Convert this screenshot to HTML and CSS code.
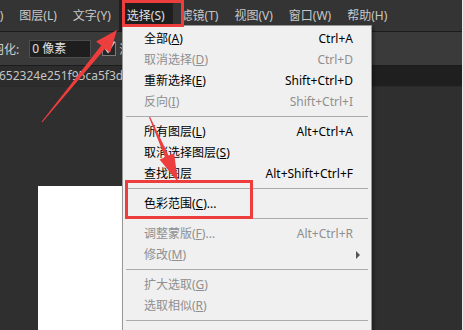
FILE: index.html
```html
<!DOCTYPE html>
<html lang="zh-CN">
<head>
<meta charset="utf-8">
<title>选择菜单</title>
<link rel="stylesheet" href="styles.css">
</head>
<body>
<div class="app">
  <div class="menubar">
    <span class="mb-item first">图像(I)</span>
    <span class="mb-item">图层(L)</span>
    <span class="mb-item">文字(Y)</span>
    <span class="mb-item active">选择(S)</span>
    <span class="mb-item">滤镜(T)</span>
    <span class="mb-item">视图(V)</span>
    <span class="mb-item">窗口(W)</span>
    <span class="mb-item">帮助(H)</span>
  </div>
  <div class="optbar">
    <span class="opt-label">羽化:</span>
    <span class="opt-input">0 像素</span>
    <span class="opt-check">
      <svg width="14" height="15" viewBox="0 0 14 15">
        <rect x="0.5" y="1.5" width="13" height="13" fill="#262626" stroke="#7a7a7a"/>
        <path d="M3.5 7.5 L6 11 L12.5 0.5" fill="none" stroke="#cfcfcf" stroke-width="1.6"/>
      </svg>
    </span>
    <span class="opt-text">消</span>
  </div>
  <div class="tabbar"><span class="tab">652324e251f95ca5f3d</span></div>
  <div class="workspace"><div class="canvas"></div></div>
</div>

<div class="menu">
  <div class="mi"><span>全部(<u>A</u>)</span><span>Ctrl+A</span></div>
  <div class="mi dis"><span>取消选择(<u>D</u>)</span><span>Ctrl+D</span></div>
  <div class="mi"><span>重新选择(<u>E</u>)</span><span>Shift+Ctrl+D</span></div>
  <div class="mi dis"><span>反向(<u>I</u>)</span><span>Shift+Ctrl+I</span></div>
  <div class="sep"></div>
  <div class="mi"><span>所有图层(<u>L</u>)</span><span>Alt+Ctrl+A</span></div>
  <div class="mi"><span>取消选择图层(<u>S</u>)</span><span></span></div>
  <div class="mi"><span>查找图层</span><span>Alt+Shift+Ctrl+F</span></div>
  <div class="sep"></div>
  <div class="mi"><span>色彩范围(<u>C</u>)...</span><span></span></div>
  <div class="sep"></div>
  <div class="mi dis"><span>调整蒙版(<u>F</u>)...</span><span>Alt+Ctrl+R</span></div>
  <div class="mi dis"><span>修改(<u>M</u>)</span><span class="sub-arrow"></span></div>
  <div class="sep"></div>
  <div class="mi dis"><span>扩大选取(<u>G</u>)</span><span></span></div>
  <div class="mi dis"><span>选取相似(<u>R</u>)</span><span></span></div>
  <div class="sep"></div>
</div>

<div class="anno box-menu"></div>
<div class="anno box-item"></div>
<svg class="arrows" width="463" height="330" viewBox="0 0 463 330">
  <polygon points="41.6,121.7 101.2,45.5 96.1,41.4 117,30 110.1,52.8 105.0,48.7 42.4,122.3" fill="#ee3d3d"/>
  <polygon points="149.0,117.2 165.0,157.2 159.5,159.6 178,182 174.1,153.2 168.6,155.6 150.0,116.8" fill="#ee3d3d"/>
</svg>
</body>
</html>
```
FILE: styles.css
```css
* { box-sizing: border-box; }
html, body { margin: 0; padding: 0; }
body {
  width: 463px;
  height: 330px;
  overflow: hidden;
  position: relative;
  font-family: "Noto Sans", "Noto Sans CJK SC", sans-serif;
  font-size: 12px;
  background: #303030;
}
.app {
  width: 463px;
  height: 330px;
  display: flex;
  flex-direction: column;
  border-right: 1px solid #ececec;
  overflow: hidden;
}
.menubar {
  height: 32px;
  flex: none;
  display: flex;
  background: #343434;
  border-bottom: 1px solid #1c1c1c;
  color: #c8c8c8;
  white-space: nowrap;
}
.mb-item { padding: 0 8px; line-height: 31px; }
.mb-item.first { margin-left: -40px; }
.mb-item.active { background: #1f1f1f; color: #e0e0e0; }

.optbar {
  height: 34px;
  flex: none;
  display: flex;
  align-items: center;
  background: #3a3a3a;
  border-bottom: 1px solid #1c1c1c;
  color: #cfcfcf;
  white-space: nowrap;
}
.opt-label { margin-left: -8px; }
.opt-input {
  margin-left: 10px;
  width: 62px;
  height: 18px;
  background: #1e1e1e;
  border: 1px solid #4d4d4d;
  color: #e2e2e2;
  padding-left: 2px;
  line-height: 16px;
}
.opt-check { margin-left: 11px; width: 14px; height: 15px; display: flex; }
.opt-text { margin-left: 3px; }

.tabbar {
  height: 21px;
  flex: none;
  display: flex;
  background: #1f1f1f;
  border-bottom: 1px solid #2a2a2a;
}
.tab {
  width: 124px;
  background: #2c2c2c;
  color: #c4c4c4;
  line-height: 20px;
  margin-left: -1px;
  white-space: nowrap;
}
.workspace {
  flex: 1;
  background: #2f2f2f;
  padding: 99px 0 0 38px;
}
.canvas { width: 300px; height: 100%; background: #ffffff; }

.menu {
  position: absolute;
  left: 122px;
  top: 25px;
  width: 250px;
  height: 320px;
  background: #f0f0f0;
  border: 1px solid #979797;
  padding: 2px 0;
  box-shadow: 2px 2px 3px rgba(0, 0, 0, 0.35);
  color: #000;
}
.mi {
  height: 21px;
  display: flex;
  align-items: center;
  justify-content: space-between;
  padding: 0 18px 0 21px;
  line-height: 21px;
  white-space: nowrap;
}
.mi.dis { color: #8f8f8f; }
.mi u { text-underline-offset: 1px; }
.sep { height: 9px; padding-top: 4px; margin: 0 3px; }
.sep::before { content: ""; display: block; height: 1px; background: #ababab; }
.sub-arrow {
  width: 0;
  height: 0;
  border-left: 4px solid #555;
  border-top: 4px solid transparent;
  border-bottom: 4px solid transparent;
  margin-right: -7px;
}

.anno { position: absolute; border: 3px solid #ee3d3d; }
.box-menu { left: 122px; top: 0; width: 62px; height: 27px; }
.box-item { left: 125px; top: 180px; width: 128px; height: 39px; }
.arrows { position: absolute; left: 0; top: 0; pointer-events: none; }
```
